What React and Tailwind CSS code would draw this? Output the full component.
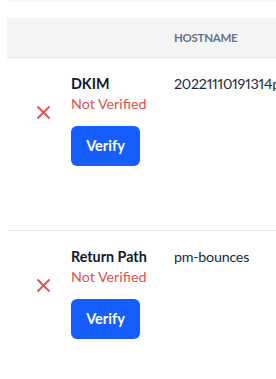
import React from "react";

const records = [
  { name: "DKIM", host: "20221110191314pm._domainkey" },
  { name: "Return Path", host: "pm-bounces" },
];

const XIcon = () => (
  <svg width="15" height="15" viewBox="0 0 15 15" fill="none">
    <path d="M1.5 1.5L13.5 13.5M13.5 1.5L1.5 13.5" stroke="#d9534f" strokeWidth="1.8" />
  </svg>
);

export default function App() {
  return (
    <div className="w-[276px] h-[379px] overflow-hidden bg-white font-['Lato',sans-serif]">
      <div className="ml-2 h-[2px] bg-red-50" />

      <div className="ml-[7px] mt-4 w-[600px]">
        <div className="flex h-10 items-center bg-gray-100 border-b border-gray-200">
          <div className="w-[167px]" />
          <div className="text-[11.5px] font-bold uppercase tracking-[-0.3px] text-gray-500">Hostname</div>
        </div>

        {records.map((r) => (
          <div key={r.name} className="flex h-[173px] border-b border-gray-200">
            <div className="w-[64px] pl-[29px] pt-[47px]">
              <XIcon />
            </div>
            <div className="w-[103px] pt-4">
              <div className="text-[14.3px] leading-5 font-bold text-gray-900">{r.name}</div>
              <div className="text-[14.3px] leading-5 text-[#d9534f]">Not Verified</div>
              <button className="mt-3 h-10 w-[69px] rounded-md bg-blue-600 text-[14.5px] font-bold text-white">
                Verify
              </button>
            </div>
            <div className="pt-4 text-[14.3px] leading-5 whitespace-nowrap proportional-nums tracking-[-0.25px] text-gray-800">
              {r.host}
            </div>
          </div>
        ))}
      </div>
    </div>
  );
}
